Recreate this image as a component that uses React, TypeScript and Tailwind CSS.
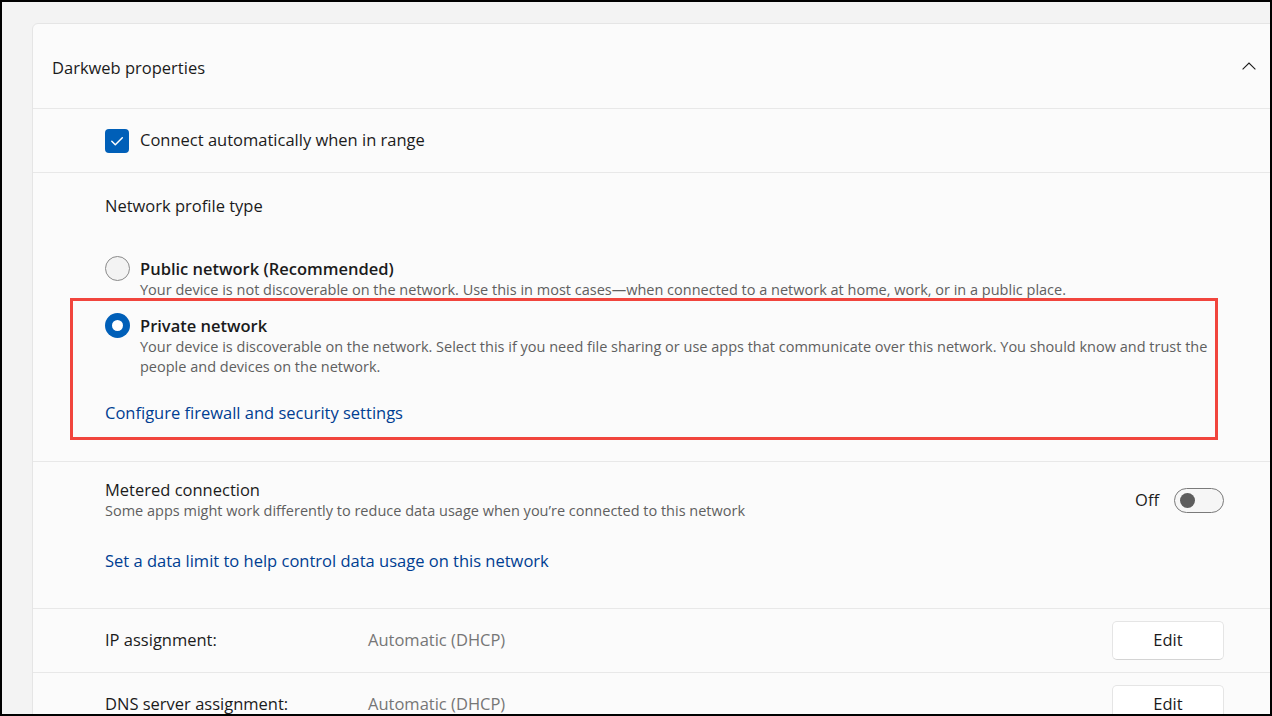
const font = { fontFamily: '"Open Sans", "Noto Sans", sans-serif' };

function RadioDot({ checked }: { checked: boolean }) {
  if (checked) {
    return (
      <span className="flex h-[25px] w-[25px] shrink-0 items-center justify-center rounded-full bg-[#005fb8]">
        <span className="block h-[11px] w-[11px] rounded-full bg-white" />
      </span>
    );
  }
  return <span className="block h-[25px] w-[25px] shrink-0 rounded-full border border-[#8a8a8a] bg-[#f3f3f3]" />;
}

function RadioOption({ checked, title, children }: { checked: boolean; title: string; children: React.ReactNode }) {
  return (
    <div className="flex items-start gap-[10px]">
      <div className="-mt-[2px] shrink-0">
        <RadioDot checked={checked} />
      </div>
      <div>
        <p className="text-[16.5px] font-semibold leading-[22px] text-[#1b1b1b]">{title}</p>
        <p className="text-[14.5px] leading-[20px] text-[#5f5f5f]">{children}</p>
      </div>
    </div>
  );
}

function EditRow({ label, value }: { label: string; value: string }) {
  return (
    <div className="flex h-[64px] items-center border-b border-[#e8e8e8] pl-[72px] pr-[57px]">
      <span className="w-[263px] text-[16.5px] text-[#1b1b1b]">{label}</span>
      <span className="flex-1 text-[16.5px] text-[#767676]">{value}</span>
      <button className="h-[39px] w-[112px] rounded-[5px] border border-[#e5e5e5] border-b-[#d4d4d4] bg-white text-[16.5px] text-[#1b1b1b]">
        Edit
      </button>
    </div>
  );
}

export default function App() {
  return (
    <div
      className="relative h-[716px] w-[1272px] overflow-hidden border-2 border-black bg-[#f3f3f3]"
      style={font}
    >
      <div className="ml-[30px] mt-[21px] w-[1250px] rounded-t-[6px] border border-[#e5e5e5] bg-[#fbfbfb]">
        {/* header */}
        <div className="flex h-[85px] items-center justify-between border-b border-[#e8e8e8] pl-[19px] pr-[25px] pt-[5px]">
          <span className="text-[16.5px] text-[#1b1b1b]">Darkweb properties</span>
          <svg className="-mt-[6px]" width="14" height="8" viewBox="0 0 14 8" fill="none">
            <polyline points="0.6,7.4 7,1 13.4,7.4" stroke="#1b1b1b" strokeWidth="1.1" />
          </svg>
        </div>

        {/* auto connect */}
        <div className="flex h-[64px] items-center gap-[11px] border-b border-[#e8e8e8] pl-[72px]">
          <span className="flex h-[24px] w-[24px] items-center justify-center rounded-[4px] bg-[#005fb8]">
            <svg width="24" height="24" viewBox="0 0 24 24" fill="none">
              <polyline
                points="6.8,12.3 10.3,15.8 17.3,8.8"
                stroke="white"
                strokeWidth="1.5"
                strokeLinecap="round"
                strokeLinejoin="round"
              />
            </svg>
          </span>
          <span className="text-[16.5px] text-[#1b1b1b]">Connect automatically when in range</span>
        </div>

        {/* profile type */}
        <div className="border-b border-[#e8e8e8] pb-[36px] pl-[72px] pr-[40px] pt-[21px]">
          <p className="text-[16.5px] leading-[24px] text-[#1b1b1b]">Network profile type</p>
          <div className="mt-[40px]">
            <RadioOption checked={false} title="Public network (Recommended)">
              Your device is not discoverable on the network. Use this in most cases—when connected to a network at home,
              work, or in a public place.
            </RadioOption>
          </div>
          <div className="mt-[15px]">
            <RadioOption checked title="Private network">
              Your device is discoverable on the network. Select this if you need file sharing or use apps that communicate
              over this network. You should know and trust the people and devices on the network.
            </RadioOption>
          </div>
          <a className="mt-[24px] block text-[16.5px] leading-[24px] text-[#003e92]">Configure firewall and security settings</a>
        </div>

        {/* metered */}
        <div className="border-b border-[#e8e8e8] pb-[35px] pl-[72px] pr-[57px] pt-[17px]">
          <div className="flex items-center justify-between">
            <div>
              <p className="text-[16.5px] leading-[22px] text-[#1b1b1b]">Metered connection</p>
              <p className="text-[14.5px] leading-[20px] text-[#5f5f5f]">
                Some apps might work differently to reduce data usage when you’re connected to this network
              </p>
            </div>
            <div className="flex items-center gap-[15px]">
              <span className="text-[16.5px] text-[#1b1b1b]">Off</span>
              <span className="flex h-[25px] w-[50px] items-center rounded-full border border-[#7a7a7a] bg-[#f6f6f6] pl-[5px]">
                <span className="block h-[15px] w-[15px] rounded-full bg-[#5d5d5d]" />
              </span>
            </div>
          </div>
          <a className="mt-[28px] block text-[16.5px] leading-[24px] text-[#003e92]">
            Set a data limit to help control data usage on this network
          </a>
        </div>

        <EditRow label="IP assignment:" value="Automatic (DHCP)" />
        <EditRow label="DNS server assignment:" value="Automatic (DHCP)" />
      </div>

      {/* highlight annotation */}
      <div className="absolute left-[68px] top-[296px] h-[142px] w-[1148px] border-[3px] border-[#f1453d]" />
    </div>
  );
}
